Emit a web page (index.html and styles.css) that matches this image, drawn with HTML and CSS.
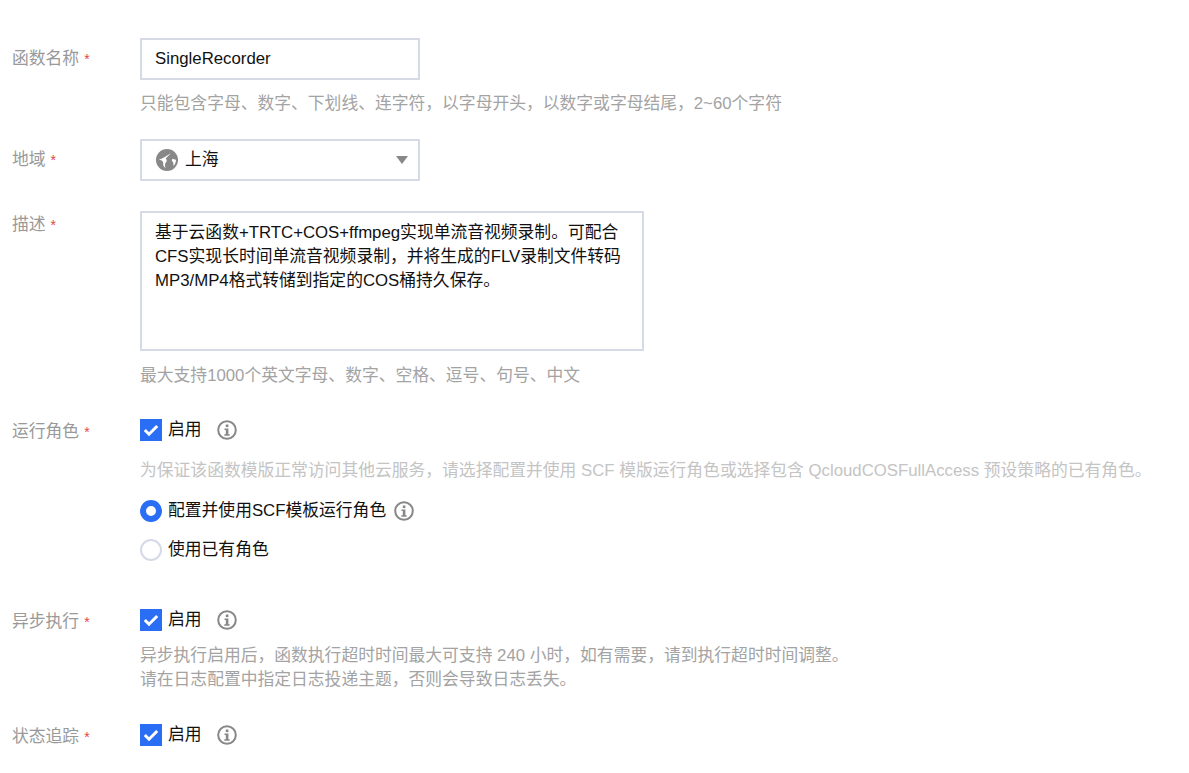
FILE: index.html
```html
<!DOCTYPE html>
<html lang="zh-CN">
<head>
<meta charset="utf-8">
<title>函数配置</title>
<link rel="stylesheet" href="styles.css">
</head>
<body>
<form class="form">
  <div class="row row-name">
    <div class="label">函数名称<span class="req">*</span></div>
    <div class="field">
      <div class="input"><span class="value">SingleRecorder</span></div>
      <p class="help help-input">只能包含字母、数字、下划线、连字符，以字母开头，以数字或字母结尾，2~60个字符</p>
    </div>
  </div>
  <div class="row row-region">
    <div class="label">地域<span class="req">*</span></div>
    <div class="field">
      <div class="input select">
        <svg class="globe" viewBox="0 0 24 24"><circle cx="12" cy="12" r="12" fill="#888"/><path d="M16 4.500c-1.800 1.300-3.800 2.700-5.500 3.800-1.800 1.100-4.500 2.500-7.500 3.700 2 0 3.400.5 4.300 1.500 1 1.300.3 2.800.7 4.300.4 1.300 1.300 2.300 2.500 3.200-.5-1.700-1-3.300-.6-4.700.5-1.500 2-2.400 1.800-3.900-.1-1-1-1.500-.9-2.400.9-1.100 3.200-2.800 5.200-5.500z" fill="#fff"/><path d="M18.500 10.500c1.100.6 2.200 1 3.300 1.200 0 2.700-1 5.200-2.800 7 .2-1.700.1-3.100-.5-4.300-.6-1-1.400-1.400-1.200-2.400.1-.6.500-1.100 1.200-1.500z" fill="#fff"/></svg>
        <span class="value">上海</span>
        <span class="caret"></span>
      </div>
    </div>
  </div>
  <div class="row row-desc">
    <div class="label label-top">描述<span class="req">*</span></div>
    <div class="field">
      <div class="textarea">基于云函数+TRTC+COS+ffmpeg实现单流音视频录制。可配合CFS实现长时间单流音视频录制，并将生成的FLV录制文件转码MP3/MP4格式转储到指定的COS桶持久保存。</div>
      <p class="help help-area">最大支持1000个英文字母、数字、空格、逗号、句号、中文</p>
    </div>
  </div>
  <div class="row row-role">
    <div class="label label-top">运行角色<span class="req">*</span></div>
    <div class="field">
      <div class="option">
        <span class="check"><svg viewBox="0 0 22 22"><path d="M4.800 11l4.200 4.200 8.200-8.200" fill="none" stroke="#fff" stroke-width="3"/></svg></span>
        <span class="value">启用</span>
        <svg class="info" viewBox="0 0 20 20"><circle cx="10" cy="10" r="8.800" fill="none" stroke="#888" stroke-width="2"/><rect x="8.800" y="4.500" width="2.600" height="2.600" fill="#888"/><path d="M7.500 8.400h3.900v5.800h1.300v1.600H7.300v-1.600h1.500V10H7.500z" fill="#888"/></svg>
      </div>
      <p class="help help-light">为保证该函数模版正常访问其他云服务，请选择配置并使用 SCF 模版运行角色或选择包含 QcloudCOSFullAccess 预设策略的已有角色。</p>
      <div class="option option-radio1">
        <span class="radio radio-on"></span>
        <span class="value">配置并使用SCF模板运行角色</span>
        <svg class="info info-tight" viewBox="0 0 20 20"><circle cx="10" cy="10" r="8.800" fill="none" stroke="#888" stroke-width="2"/><rect x="8.800" y="4.500" width="2.600" height="2.600" fill="#888"/><path d="M7.500 8.400h3.900v5.800h1.300v1.600H7.300v-1.600h1.500V10H7.500z" fill="#888"/></svg>
      </div>
      <div class="option option-radio2">
        <span class="radio"></span>
        <span class="value">使用已有角色</span>
      </div>
    </div>
  </div>
  <div class="row row-async">
    <div class="label label-top">异步执行<span class="req">*</span></div>
    <div class="field">
      <div class="option">
        <span class="check"><svg viewBox="0 0 22 22"><path d="M4.800 11l4.200 4.200 8.200-8.200" fill="none" stroke="#fff" stroke-width="3"/></svg></span>
        <span class="value">启用</span>
        <svg class="info" viewBox="0 0 20 20"><circle cx="10" cy="10" r="8.800" fill="none" stroke="#888" stroke-width="2"/><rect x="8.800" y="4.500" width="2.600" height="2.600" fill="#888"/><path d="M7.500 8.400h3.900v5.800h1.300v1.600H7.300v-1.600h1.500V10H7.500z" fill="#888"/></svg>
      </div>
      <p class="help help-async">异步执行启用后，函数执行超时时间最大可支持 240 小时，如有需要，请到执行超时时间调整。<br>请在日志配置中指定日志投递主题，否则会导致日志丢失。</p>
    </div>
  </div>
  <div class="row row-trace">
    <div class="label label-top">状态追踪<span class="req">*</span></div>
    <div class="field">
      <div class="option">
        <span class="check"><svg viewBox="0 0 22 22"><path d="M4.800 11l4.200 4.200 8.200-8.200" fill="none" stroke="#fff" stroke-width="3"/></svg></span>
        <span class="value">启用</span>
        <svg class="info" viewBox="0 0 20 20"><circle cx="10" cy="10" r="8.800" fill="none" stroke="#888" stroke-width="2"/><rect x="8.800" y="4.500" width="2.600" height="2.600" fill="#888"/><path d="M7.500 8.400h3.900v5.800h1.300v1.600H7.300v-1.600h1.500V10H7.500z" fill="#888"/></svg>
      </div>
    </div>
  </div>
</form>
</body>
</html>
```
FILE: styles.css
```css
* { box-sizing: border-box; }
html, body { margin: 0; height: 100%; overflow: hidden; background: #fff; }
body {
  font-family: "Liberation Sans", "Noto Sans CJK SC", sans-serif;
  font-size: 16.8px;
  line-height: 24px;
  color: #111;
}
.form { padding: 38px 0 0 12px; }
.row { display: flex; }
.label { width: 128px; flex: none; color: #999; padding-top: 9px; white-space: nowrap; }
.label-top { padding-top: 2px; }
.req { color: #e54545; margin-left: 5px; font-size: 14px; }
.field { flex: 1; min-width: 0; }
.value { display: block; }
.help { margin: 0; color: #a3a3a3; white-space: nowrap; }
.help-input { margin-top: 12px; margin-bottom: -1px; }
.help-area { margin-top: 13px; margin-bottom: -1px; }
.help-light { margin-top: 17px; margin-bottom: -1px; color: #c4c4c4; }
.help-async { margin-top: 12px; margin-bottom: -1px; }
.input {
  width: 280px;
  height: 42px;
  border: 2px solid #d5dae6;
  padding: 0 14px 0 13px;
  display: flex;
  align-items: center;
}
.globe { width: 22px; height: 22px; margin-left: 1px; margin-right: 7px; flex: none; }
.caret {
  margin-left: auto;
  margin-right: -4px;
  width: 0;
  height: 0;
  border-left: 6px solid transparent;
  border-right: 6px solid transparent;
  border-top: 8px solid #888;
}
.textarea {
  width: 504px;
  height: 140px;
  border: 2px solid #d5dae6;
  padding: 8px 13px;
}
.option { display: flex; align-items: center; height: 24px; }
.check {
  width: 22px;
  height: 22px;
  background: #2a6ef6;
  margin-right: 6px;
  flex: none;
}
.check svg { display: block; width: 22px; height: 22px; }
.radio {
  width: 22px;
  height: 22px;
  border-radius: 50%;
  border: 2px solid #d5dae6;
  margin-right: 6px;
  flex: none;
}
.radio-on { border: 6px solid #2a6ef6; }
.info { width: 20px; height: 20px; margin-left: 15px; flex: none; }
.info-tight { margin-left: 8px; }
.option-radio1 { margin-top: 17px; }
.option-radio2 { margin-top: 15px; }
.row-name { margin-bottom: 24px; }
.row-region { margin-bottom: 30px; }
.row-desc { margin-bottom: 31px; }
.row-role { margin-bottom: 46px; }
.row-async { margin-bottom: 32px; }
```
